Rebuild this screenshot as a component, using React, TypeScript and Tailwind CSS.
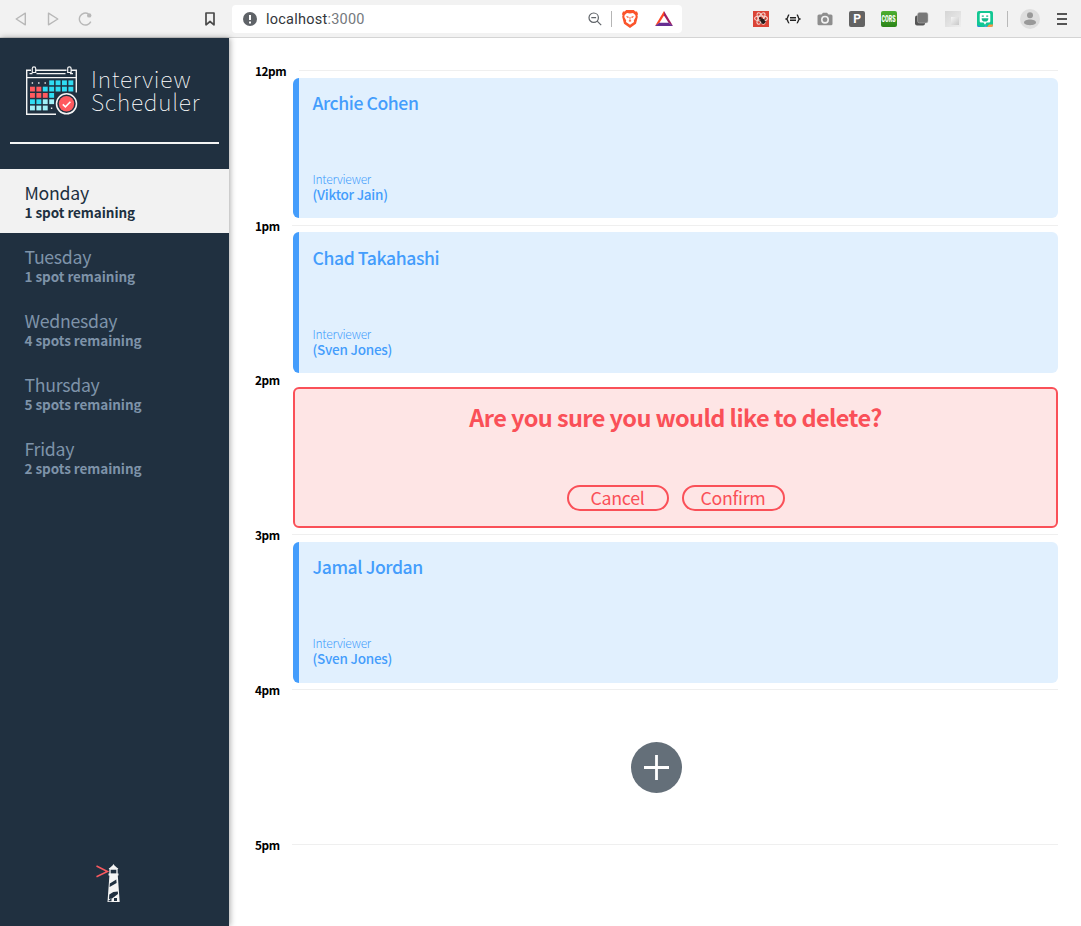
import React from "react";

const days = [
  { name: "Monday", spots: "1 spot remaining", selected: true },
  { name: "Tuesday", spots: "1 spot remaining" },
  { name: "Wednesday", spots: "4 spots remaining" },
  { name: "Thursday", spots: "5 spots remaining" },
  { name: "Friday", spots: "2 spots remaining" },
];

function BrowserBar() {
  return (
    <header className="flex h-[38px] shrink-0 items-center border-b border-[#d4d4d4] bg-[#f2f2f2] font-['Roboto',sans-serif]">
      <div className="flex w-[232px] shrink-0 items-center pl-[14px]">
        <svg width="14" height="14" viewBox="0 0 14 14" fill="none" stroke="#b8b8b8" strokeWidth="1.4" strokeLinejoin="round">
          <path d="M11.3 1.2v11.6L2.2 7z" />
        </svg>
        <svg className="ml-[18px]" width="14" height="14" viewBox="0 0 14 14" fill="none" stroke="#b8b8b8" strokeWidth="1.4" strokeLinejoin="round">
          <path d="M2.5 1.2v11.6L11.8 7z" />
        </svg>
        <svg className="ml-[18px]" width="15" height="14" viewBox="0 0 15 14" fill="none" stroke="#b8b8b8" strokeWidth="1.4">
          <path d="M12.8 9.6A6 6 0 1 1 10.5 1.9" />
          <circle cx="11.2" cy="3.4" r="2.2" fill="#b8b8b8" stroke="none" />
        </svg>
        <svg className="ml-[112px]" width="10" height="14" viewBox="0 0 10 14" fill="none" stroke="#4a4a4a" strokeWidth="1.7" strokeLinejoin="round">
          <path d="M1 1h8v11.8L5 9.5l-4 3.3z" />
        </svg>
      </div>
      <div className="flex h-7 w-[450px] shrink-0 items-center rounded bg-white">
        <svg className="ml-[11px]" width="14" height="14" viewBox="0 0 14 14">
          <circle cx="7" cy="7" r="7" fill="#5f6368" />
          <path d="M6 3h2v5H6zM6 9.4h2v2H6z" fill="#fff" />
        </svg>
        <div className="ml-[9px] w-[322px] pt-[2px] text-[14.5px] leading-4 tracking-[0.24px] text-[#33363a]">
          localhost<span className="text-[#75797d]">:3000</span>
        </div>
        <svg width="14" height="14" viewBox="0 0 14 14" fill="none" stroke="#5f6368" strokeWidth="1.2">
          <circle cx="5.7" cy="5.7" r="4.7" />
          <path d="M3.3 5.7h4.8M9.2 9.2l4 4" />
        </svg>
        <div className="ml-[9px] h-4 w-px bg-[#b5b5b5]" />
        <svg className="ml-[10px]" width="16" height="18" viewBox="0 0 16 18">
          <path d="M4.2 0h7.6l1.5 1.5 1.7-.1 1 2.6-.6 1.5.4 1.3-1.8 7L8 18l-6-4.2-1.8-7 .4-1.3L0 4l1-2.6 1.7.1z" fill="#fb542b" />
          <path d="M5 3l3 .5 3-.5 2.300 2 .4 2-1.900 3.500.2 1.500L8 14.800 4 12l.2-1.500L2.300 7l.4-2z" fill="#fff" />
          <path d="M4.200 6l2.500.7-.4 1.200-1.300-.5zM11.800 6l-2.500.7.4 1.200 1.300-.5zM7.500 7h1l-.2 3 1.200.9L8 11.700l-1.500-.8 1.200-.9z" fill="#fb542b" />
        </svg>
        <svg className="ml-[17px]" width="18" height="15" viewBox="0 0 18 15">
          <path d="M9 0v4.5L4.3 12 0 15z" fill="#ff4724" />
          <path d="M9 0l9 15-4.3-3L9 4.5z" fill="#9e1f63" />
          <path d="M0 15l4.3-3.2h9.4L18 15z" fill="#662d91" />
        </svg>
      </div>
      <div className="flex flex-1 items-center pl-[71px]">
        <svg width="16" height="16" viewBox="0 0 16 16">
          <path d="M0 0h16v16H0z" fill="#db4437" />
          <g fill="none" stroke="#f5d8d2" strokeWidth="1.1">
            <ellipse cx="8" cy="7.5" rx="6.4" ry="2.5" />
            <ellipse cx="8" cy="7.5" rx="6.4" ry="2.5" transform="rotate(60 8 7.5)" />
            <ellipse cx="8" cy="7.5" rx="6.4" ry="2.5" transform="rotate(120 8 7.5)" />
          </g>
          <ellipse cx="9.8" cy="10.2" rx="2" ry="2.8" fill="#251d1b" transform="rotate(-35 9.8 10.2)" />
          <circle cx="7.3" cy="7.3" r="1.3" fill="#251d1b" />
          <path d="M6 10l6.500-2M7.500 12.500l5.500-2" stroke="#251d1b" strokeWidth=".7" />
        </svg>
        <svg className="ml-4" width="16" height="16" viewBox="0 0 16 16" fill="none" stroke="#222" strokeWidth="1.4">
          <path d="M4.2 4C2.5 4 3.2 7.3 1.5 8c1.7.7 1 4 2.7 4M11.8 4c1.7 0 1 3.3 2.7 4-1.7.7-1 4-2.7 4" />
          <path d="M5 6.700h6M5 9.300h6" strokeWidth="1.5" />
        </svg>
        <svg className="ml-4" width="16" height="16" viewBox="0 0 16 16" fill="#8e8e8e">
          <path fillRule="evenodd" d="M2 3.5h2.5L6 1.7h4l1.5 1.8H14a1.5 1.5 0 0 1 1.5 1.5v7.8a1.5 1.5 0 0 1-1.5 1.5H2a1.5 1.5 0 0 1-1.5-1.5V5A1.5 1.5 0 0 1 2 3.5zM8 4.7a4 4 0 1 0 0 8 4 4 0 0 0 0-8z" />
          <circle cx="8" cy="8.7" r="2.4" />
        </svg>
        <div className="ml-4 flex h-4 w-4 items-center justify-center rounded-[2px] bg-[#636363] text-[12px] font-bold leading-none text-white">P</div>
        <div className="ml-4 flex h-4 w-4 items-center justify-center rounded-[2px] bg-linear-to-b from-[#4daf32] to-[#2b8518]">
          <span className="mt-px scale-x-[0.82] scale-y-[1.3] text-[6.5px] font-black leading-none text-white">CORS</span>
        </div>
        <svg className="ml-4" width="16" height="16" viewBox="0 0 16 16">
          <rect x="2" y="4.5" width="10" height="10" rx="2" fill="#555" />
          <rect x="4.5" y="1.5" width="10.5" height="10.5" rx="2" fill="#787878" stroke="#bbb" strokeWidth=".5" />
        </svg>
        <div className="ml-4 flex h-4 w-4 items-center justify-center bg-linear-to-br from-[#d5d5d5] to-[#eee]">
          <div className="mt-1 ml-1 h-2 w-2 bg-linear-to-br from-[#f5f5f5] to-[#c8c8c8]" />
        </div>
        <svg className="ml-4" width="16" height="16" viewBox="0 0 16 16">
          <rect width="16" height="16" rx="2" fill="#12c793" />
          <path d="M7 16l2-2 1 2z" fill="#5595ed" />
          <path d="M10 16l2-2.5 4 0V14a2 2 0 0 1-2 2z" fill="#ff9645" />
          <path d="M0 14l4 2H2a2 2 0 0 1-2-2z" fill="#2f7df0" />
          <path d="M4 2h8a1.3 1.3 0 0 1 1.3 1.3v7A1.3 1.3 0 0 1 12 11.600H9.500L8 13.800l-1.500-2.200H4a1.300 1.300 0 0 1-1.300-1.300v-7A1.300 1.300 0 0 1 4 2z" fill="#fff" />
          <path d="M4.800 5.200h2M9.200 5.200h2" stroke="#12b98a" strokeWidth="1.3" />
          <path d="M4.600 7.200h6.800a3.400 3.400 0 0 1-6.800 0z" fill="#12b98a" />
        </svg>
        <div className="ml-[14px] h-4 w-px bg-[#b9b9b9]" />
        <svg className="ml-3" width="20" height="20" viewBox="0 0 20 20">
          <circle cx="10" cy="10" r="10" fill="#dedede" />
          <circle cx="10" cy="6.3" r="3" fill="#999" />
          <path d="M4 13.500c0-4 12-4 12 0 0 3.500-12 3.500-12 0z" fill="#999" />
        </svg>
        <svg className="ml-[17px]" width="11" height="14" viewBox="0 0 11 14" stroke="#555" strokeWidth="1.8">
          <path d="M0 2h10M0 7h10M0 12h10" />
        </svg>
      </div>
    </header>
  );
}

const cells: [number, number, string][] = [
  ...[3, 4, 5, 6].map((c): [number, number, string] => [c, 0, "#2fdcf3"]),
  [0, 1, "#ff5a5f"], [1, 1, "#ff5a5f"],
  ...[2, 3, 4, 5, 6].map((c): [number, number, string] => [c, 1, "#2fdcf3"]),
  [0, 2, "#ff5a5f"], [1, 2, "#ff5a5f"], [2, 2, "#ff5a5f"], [3, 2, "#2fdcf3"],
  [0, 3, "#2fdcf3"], [1, 3, "#2fdcf3"], [2, 3, "#a0f0f7"], [3, 3, "#a0f0f7"],
  [0, 4, "#a0f0f7"], [1, 4, "#a0f0f7"], [2, 4, "#a0f0f7"],
];

function Logo() {
  return (
    <div className="flex h-[104px] items-start pt-[28px] pl-[25px]">
      <svg width="54" height="50" viewBox="0 0 54 50" fill="none">
        <path d="M31 48.300H1.700V4.300H6M10.500 4.300H41.500M46 4.300H51.300V26.500" stroke="#f4f4f4" strokeWidth="1.4" />
        <path d="M2 11.600h49M11.500 7.600h29M4.500 7.600h3M45 7.600h3" stroke="#f4f4f4" strokeWidth="1.3" />
        <path d="M7.300 6.500V2.500a1.700 1.700 0 0 1 3.400 0v4zM42.700 6.500V2.500a1.700 1.700 0 0 1 3.400 0v4z" stroke="#f4f4f4" strokeWidth="1.2" />
        {cells.map(([c, r, color]) => (
          <rect key={c + "-" + r} x={5 + c * 6.4} y={14.4 + r * 6.3} width="4.9" height="4.8" fill={color} />
        ))}
        <path d="M6.700 17h1.400M13.100 17h1.400M19.500 17h1.400M25.900 42.200h1.400" stroke="#eee" strokeWidth="1.4" />
        <circle cx="41.5" cy="37.8" r="12" fill="#203040" />
        <circle cx="41.5" cy="37.8" r="10" stroke="#f4f4f4" strokeWidth="1.5" />
        <circle cx="41.5" cy="37.8" r="7.7" fill="#ff5a5f" />
        <path d="M37.800 38.300l2.600 2.500 5-5" stroke="#fff" strokeWidth="1.6" />
      </svg>
      <div className="ml-3 pt-[1px] text-[23px] leading-[23px] font-thin tracking-[0.75px] text-white">
        <div>Interview</div>
        <div>Scheduler</div>
      </div>
    </div>
  );
}

function Sidebar() {
  return (
    <aside className="relative flex w-[229px] shrink-0 flex-col bg-[#203040] shadow-[1px_0_6px_rgba(0,0,0,0.35)]">
      <Logo />
      <div className="mx-[10px] h-[2px] shrink-0 bg-[#f4f4f4]" />
      <nav className="mt-[25px]">
        {days.map((d) => (
          <div
            key={d.name}
            className={d.selected ? "h-16 bg-[#f2f2f2] pt-[13px] pl-[24.5px] text-[#203040]" : "h-16 pt-[13px] pl-[24.5px] text-[#7e93a9]"}
          >
            <div className="text-[17.7px] leading-[21px] tracking-[-0.28px]">{d.name}</div>
            <div className="pt-px text-[13.5px] leading-[17px] font-bold tracking-[-0.05px]">{d.spots}</div>
          </div>
        ))}
      </nav>
      <svg className="mt-auto mb-[23px] ml-[96px]" width="26" height="40" viewBox="0 0 26 40">
        <path d="M.5 3l11 5.500-11 5.200" fill="none" stroke="#fa5a60" strokeWidth="1.5" />
        <path d="M17.500 1l1 1.500 4 3.500h-10l4-3.500z" fill="#f4f4f4" />
        <path d="M14 6h7v5.500h-7z" fill="none" stroke="#f4f4f4" strokeWidth="1.3" />
        <path d="M12.500 10.600h10v1.800h-10zM13.400 12.400h8.400L23.700 39H11.500z" fill="#f4f4f4" />
        <path d="M13.800 20.500l6.500-4 .3 3.500-7 4zM13.300 31.500l4-2.500 4.500-.5.200 2.500-6 4.500-3 .5z" fill="#203040" />
        <path d="M12.500 37.500l3-2v2.800h-3zM18 35h3v3h-3z" fill="#203040" />
      </svg>
    </aside>
  );
}

type HourProps = { time: string; line?: "full" | "inset" | "none"; short?: boolean; children?: React.ReactNode };

function Hour({ time, line = "full", short, children }: HourProps) {
  const rule = {
    full: "-ml-px h-px bg-[#efefef]",
    inset: "ml-[6px] h-px bg-[#efefef]",
    none: "h-px",
  }[line];
  return (
    <section className={short ? "flex h-[154px] shrink-0" : "flex h-[155px] shrink-0"}>
      <div className="w-[38px] shrink-0 text-[11.8px] leading-4 font-bold tracking-[-0.45px] text-black">
        <div className="-mt-[7px]">{time}</div>
      </div>
      <div className="flex-1">
        <div className={rule} />
        {children}
      </div>
    </section>
  );
}

function Appointment({ name, interviewer, size }: { name: string; interviewer: string; size: string }) {
  return (
    <article className={`${size} flex flex-col justify-between rounded-[6px] border-l-[6px] border-[#449dfc] bg-[#e1f0fe] pr-3 pl-[13.5px] text-[#449dfc]`}>
      <h2 className="text-[17.6px] leading-[24px] font-medium tracking-[-0.42px]">{name}</h2>
      <div>
        <div className="text-[12px] leading-[15px] font-light tracking-[-0.25px]">Interviewer</div>
        <div className="text-[13.5px] leading-[16px] font-medium tracking-[-0.24px]">({interviewer})</div>
      </div>
    </article>
  );
}

function Confirm() {
  return (
    <article className="mt-[7px] flex h-[141px] flex-col items-center justify-between rounded-[6px] border-2 border-[#fa5058] bg-[#fee5e5] pt-[12px] pb-[15px] text-[#fa5058]">
      <h1 className="text-[23.5px] leading-[32px] font-bold tracking-[-0.59px]">Are you sure you would like to delete?</h1>
      <div className="flex gap-[13px]">
        <button className="h-[26px] w-[102px] rounded-full border-2 border-[#fa5058] text-[17.8px] leading-[20px] tracking-[-0.3px]">
          <span className="-mt-[3px] block">Cancel</span>
        </button>
        <button className="h-[26px] w-[103px] rounded-full border-2 border-[#fa5058] text-[17.8px] leading-[20px] tracking-[-0.3px]">
          <span className="-mt-[3px] block">Confirm</span>
        </button>
      </div>
    </article>
  );
}

export default function App() {
  return (
    <div className="flex h-[926px] w-[1081px] flex-col overflow-hidden bg-white font-['Noto_Sans_CJK_SC',sans-serif]">
      <BrowserBar />
      <div className="flex min-h-0 flex-1">
        <Sidebar />
        <main className="flex flex-1 flex-col pt-[32px] pr-[23px] pl-[26px]">
          <Hour time="12pm" line="inset">
            <Appointment name="Archie Cohen" interviewer="Viktor Jain" size="mt-[7px] h-[140px] pt-[13px] pb-[16px]" />
          </Hour>
          <Hour time="1pm" short>
            <Appointment name="Chad Takahashi" interviewer="Sven Jones" size="mt-[6px] h-[141px] pt-[14px] pb-[16px]" />
          </Hour>
          <Hour time="2pm" line="none">
            <Confirm />
          </Hour>
          <Hour time="3pm">
            <Appointment name="Jamal Jordan" interviewer="Sven Jones" size="mt-[7px] h-[141px] pt-[13px] pb-[17px]" />
          </Hour>
          <Hour time="4pm">
            <div className="flex h-[153px] items-center pl-[338px]">
              <button className="mt-px h-[51px] w-[51px] rounded-full bg-[#646f79]" aria-label="Add">
                <svg width="51" height="51" viewBox="0 0 51 51" stroke="#fff" strokeWidth="2.8">
                  <path d="M25.500 13v25M13 25.500h25" />
                </svg>
              </button>
            </div>
          </Hour>
          <Hour time="5pm" />
        </main>
      </div>
    </div>
  );
}
